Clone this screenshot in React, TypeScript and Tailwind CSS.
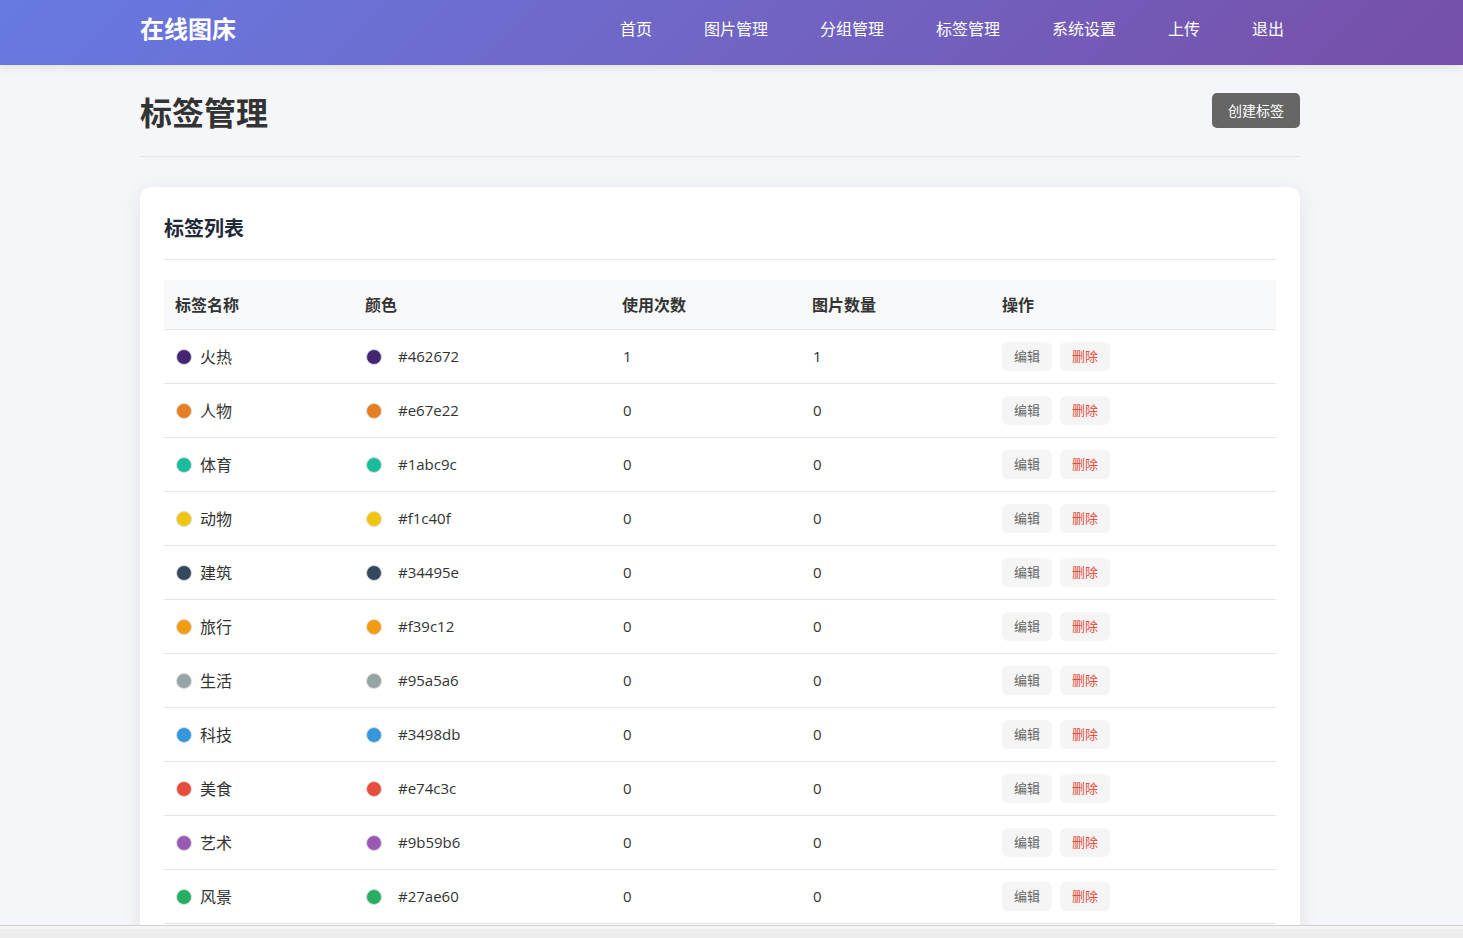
import React from 'react';

interface Tag {
  name: string;
  color: string;
  uses: number;
  images: number;
}

const NAV_ITEMS = ['首页', '图片管理', '分组管理', '标签管理', '系统设置', '上传', '退出'];

const TAGS: Tag[] = [
  { name: '火热', color: '#462672', uses: 1, images: 1 },
  { name: '人物', color: '#e67e22', uses: 0, images: 0 },
  { name: '体育', color: '#1abc9c', uses: 0, images: 0 },
  { name: '动物', color: '#f1c40f', uses: 0, images: 0 },
  { name: '建筑', color: '#34495e', uses: 0, images: 0 },
  { name: '旅行', color: '#f39c12', uses: 0, images: 0 },
  { name: '生活', color: '#95a5a6', uses: 0, images: 0 },
  { name: '科技', color: '#3498db', uses: 0, images: 0 },
  { name: '美食', color: '#e74c3c', uses: 0, images: 0 },
  { name: '艺术', color: '#9b59b6', uses: 0, images: 0 },
  { name: '风景', color: '#27ae60', uses: 0, images: 0 },
];

const Swatch = ({ color }: { color: string }) => (
  <span
    className="size-4 shrink-0 rounded-full border border-[#dddddd]"
    style={{ backgroundColor: color }}
  />
);

const Header = () => (
  <header className="relative z-10 shrink-0 bg-linear-135 from-[#667ae2] to-[#764fa8] pr-[23px] text-white shadow-[0_2px_10px_rgba(0,0,0,0.1)]">
    <div className="mx-auto flex h-[65px] max-w-[1200px] items-center justify-between px-5 pb-2">
      <a href="#" className="text-2xl font-bold">
        在线图床
      </a>
      <nav className="flex gap-5">
        {NAV_ITEMS.map((item) => (
          <a key={item} href="#" className="px-4 py-2 text-base">
            {item}
          </a>
        ))}
      </nav>
    </div>
  </header>
);

const TagRow = ({ tag }: { tag: Tag }) => (
  <tr className="h-[54px]">
    <td className="border-b border-[#e5e5e5] px-3">
      <div className="flex items-center gap-2">
        <Swatch color={tag.color} />
        {tag.name}
      </div>
    </td>
    <td className="border-b border-[#e5e5e5] px-3 text-[15px]">
      <div className="flex items-center gap-4">
        <Swatch color={tag.color} />
        {tag.color}
      </div>
    </td>
    <td className="border-b border-[#e5e5e5] px-3 text-[15px]">{tag.uses}</td>
    <td className="border-b border-[#e5e5e5] px-3 text-[15px]">{tag.images}</td>
    <td className="border-b border-[#e5e5e5] px-[11px]">
      <div className="flex gap-2">
        <button type="button" className="h-[29px] rounded-md bg-[#f5f5f5] px-3 text-[13px] text-[#666666]">
          编辑
        </button>
        <button type="button" className="h-[29px] rounded-md bg-[#f5f5f5] px-3 text-[13px] text-[#e74c3c]">
          删除
        </button>
      </div>
    </td>
  </tr>
);

const TagTable = () => (
  <table className="w-full table-fixed border-separate border-spacing-0 text-left text-base">
    <colgroup>
      <col className="w-[190px]" />
      <col className="w-[257px]" />
      <col className="w-[190px]" />
      <col className="w-[190px]" />
      <col />
    </colgroup>
    <thead>
      <tr className="h-[50px] bg-[#f8f9fb]">
        <th className="border-b border-[#e5e5e5] px-[11px] font-semibold">标签名称</th>
        <th className="border-b border-[#e5e5e5] px-[11px] font-semibold">颜色</th>
        <th className="border-b border-[#e5e5e5] px-[11px] font-semibold">使用次数</th>
        <th className="border-b border-[#e5e5e5] px-[11px] font-semibold">图片数量</th>
        <th className="border-b border-[#e5e5e5] px-[11px] font-semibold">操作</th>
      </tr>
    </thead>
    <tbody>
      {TAGS.map((tag) => (
        <TagRow key={tag.name} tag={tag} />
      ))}
    </tbody>
  </table>
);

export default function App() {
  return (
    <div className="flex h-screen flex-col bg-[#f5f6fa] font-['Open_Sans','Noto_Sans_CJK_SC',sans-serif] text-[#333333]">
      <Header />
      <main className="min-h-0 flex-1 overflow-hidden pr-[23px]">
        <div className="mx-auto max-w-[1200px] p-5">
          <div className="mb-[30px] flex items-center justify-between border-b border-[#e5e5e5] pb-5">
            <h1 className="pt-1 text-[32px] leading-[47px] font-bold">标签管理</h1>
            <button type="button" className="h-[35px] rounded-[5px] bg-[#666666] px-4 text-sm text-white">
              创建标签
            </button>
          </div>
          <section className="rounded-xl bg-white p-6 shadow-[0_4px_20px_rgba(0,0,0,0.08)]">
            <h2 className="mb-5 border-b border-[#e5e5e5] pt-1 pb-4 text-xl leading-7 font-bold text-[#1f2937]">
              标签列表
            </h2>
            <TagTable />
          </section>
        </div>
      </main>
      <footer className="h-[13px] shrink-0 border-t border-[#d0d0d0] bg-[#ededed]">
        <div className="h-[3px] bg-[#f5f5f5]" />
      </footer>
    </div>
  );
}
